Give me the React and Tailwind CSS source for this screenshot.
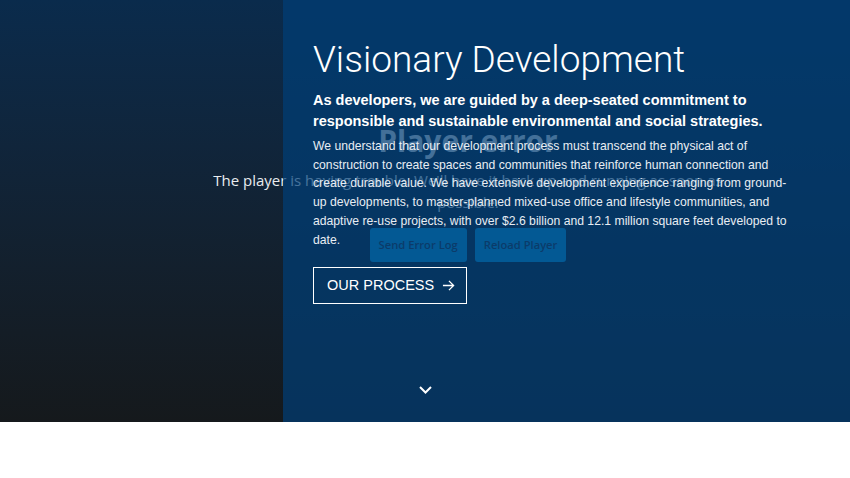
import React from "react";

const sans = { fontFamily: '"Liberation Sans", Arial, sans-serif' };
const playerFont = { fontFamily: '"Open Sans", "Noto Sans", sans-serif' };

const PlayerError = () => (
  <div className="absolute inset-0 pl-[86px] flex flex-col items-center pt-[123px] text-center" style={playerFont}>
    <h3 className="text-[30px] leading-[36px] font-bold text-[#dfe3e8]">Player error</h3>
    <p className="mt-[10px] max-w-[525px] text-[15px] leading-[22px] text-[#e9ebee]">
      The player is having trouble. We'll have it back up and running as soon as possible.
    </p>
    <div className="mt-[15px] flex gap-[8px]">
      <button className="h-[34px] px-[9px] rounded-[3px] bg-[#0a96d8] text-[11.2px] font-semibold text-[#253449]">
        Send Error Log
      </button>
      <button className="h-[34px] px-[9px] rounded-[3px] bg-[#0a96d8] text-[11.2px] font-semibold text-[#253449]">
        Reload Player
      </button>
    </div>
  </div>
);

const App = () => {
  return (
    <div className="w-[850px] h-[478px] bg-white">
      <div className="relative h-[422px] overflow-hidden bg-gradient-to-b from-[#0a2b4c] to-[#15191c]">
        <PlayerError />

        {/* intro panel */}
        <div className="absolute top-0 bottom-0 left-[283px] right-0 bg-[rgba(0,62,120,0.7)] pl-[30px] pt-[38px]">
          <div className="w-[480px]">
            <h1
              className="text-[37px] leading-[44px] font-light text-white"
              style={{ fontFamily: 'Roboto, "Liberation Sans", sans-serif' }}
            >
              Visionary Development
            </h1>
            <p className="mt-[8px] text-[14.5px] leading-[21px] font-bold text-white" style={sans}>
              As developers, we are guided by a deep-seated commitment to responsible and sustainable
              environmental and social strategies.
            </p>
            <p className="mt-[5px] text-[12.2px] leading-[18.7px] text-[#e8edf3]" style={sans}>
              We understand that our development process must transcend the physical act of construction
              to create spaces and communities that reinforce human connection and create durable value.
              We have extensive development experience ranging from ground-up developments, to
              master-planned mixed-use office and lifestyle communities, and adaptive re-use projects,
              with over $2.6 billion and 12.1 million square feet developed to date.
            </p>
            <a
              href="#"
              className="mt-[18px] inline-flex items-center gap-[8px] h-[37px] pl-[13px] pr-[11px] border-[1.5px] border-white text-white text-[14.5px]"
              style={sans}
            >
              OUR PROCESS
              <svg width="13" height="13" viewBox="0 0 14 14" fill="none" stroke="currentColor" strokeWidth="1.4">
                <path d="M1 7h11.5M7.5 2L12.5 7l-5 5" />
              </svg>
            </a>
          </div>
        </div>

        <svg
          className="absolute left-[419px] top-[386px]"
          width="13"
          height="8"
          viewBox="0 0 13 8"
          fill="none"
          stroke="white"
          strokeWidth="2"
        >
          <path d="M1 1l5.5 5.5L12 1" />
        </svg>
      </div>
    </div>
  );
};

export default App;
